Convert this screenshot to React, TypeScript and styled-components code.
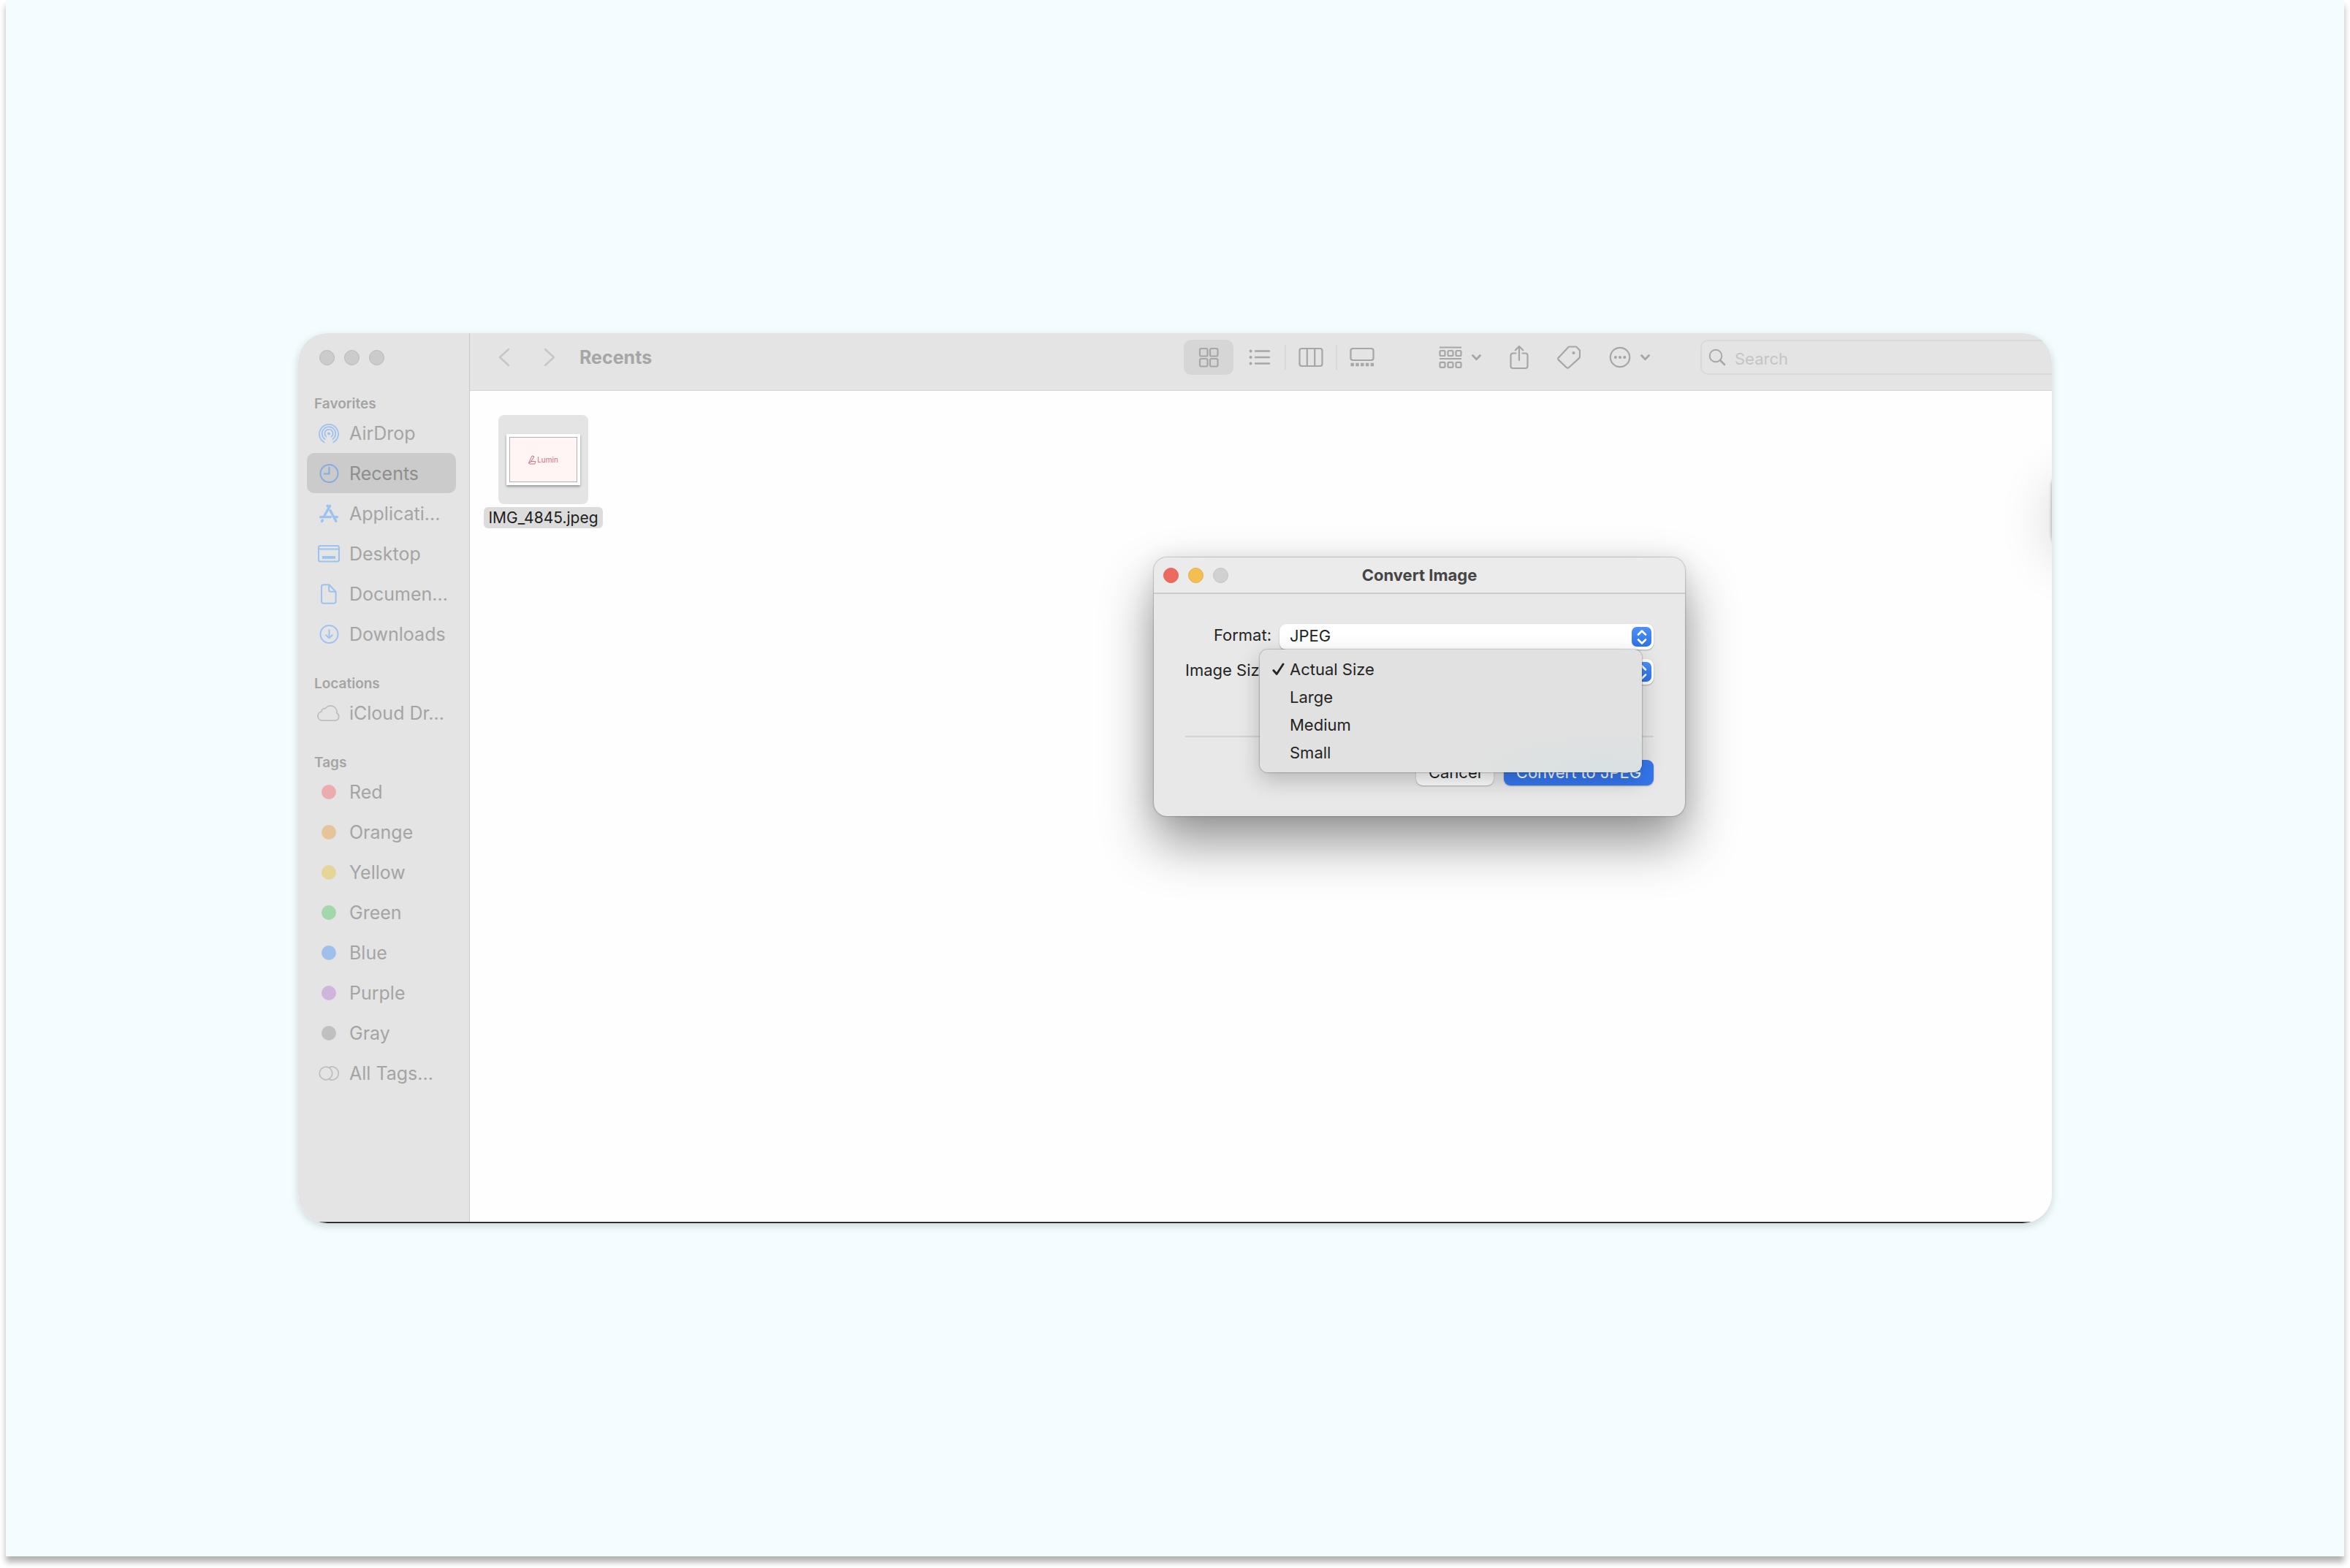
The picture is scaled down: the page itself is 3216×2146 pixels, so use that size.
import React from "react";
import styled, { createGlobalStyle, css } from "styled-components";

const GlobalStyle = createGlobalStyle`
  *, *::before, *::after { box-sizing: border-box; }
  body {
    margin: 0;
    background: #ffffff;
    font-family: Inter, "Liberation Sans", sans-serif;
    -webkit-font-smoothing: antialiased;
  }
  button, input, select {
    font: inherit;
    color: inherit;
    margin: 0;
    padding: 0;
    border: 0;
    background: none;
  }
  a { color: inherit; text-decoration: none; }
  h1, h2, ul, figure { margin: 0; padding: 0; }
  ul { list-style: none; }
  svg { display: block; flex: none; }
`;

/* ---------- page ---------- */

const Page = styled.div`
  padding: 0 8px 16px;
  overflow: hidden;
`;

const Sheet = styled.div`
  min-height: calc(100vh - 16px);
  padding: 0 400px;
  display: flex;
  align-items: center;
  background: #f3fcff;
  box-shadow: 0 8px 8px rgba(0, 0, 0, 0.3);
`;

/* ---------- finder window ---------- */

const Window = styled.section`
  flex: 1;
  min-width: 0;
  position: relative;
  display: flex;
  flex-direction: column;
  border-radius: 40px;
  overflow: hidden;
  background: #fefefe;
`;

const WindowShadow = styled.div`
  flex: 1;
  min-width: 0;
  display: flex;
  border-radius: 40px;
  box-shadow: 0 4px 12px rgba(0, 30, 40, 0.16);
`;

const Columns = styled.div`
  display: flex;
  min-height: 1216px;
`;

const BottomEdge = styled.div`
  height: 2px;
  background: linear-gradient(#6a6a6a 50%, #000000 50%);
`;

const Sidebar = styled.aside`
  width: 235px;
  flex: none;
  padding: 23px 18px 0 12px;
  background: #e4e4e4;
  border-right: 1px solid #c9c9c9;
  color: #a4a4a4;
`;

const Lights = styled.div<{ $inset: number }>`
  display: flex;
  gap: 13px;
  padding-left: ${(p) => p.$inset}px;
`;

const Light = styled.button<{ $fill: string; $ring: string }>`
  width: 21px;
  height: 21px;
  border-radius: 50%;
  background: ${(p) => p.$fill};
  border: 1px solid ${(p) => p.$ring};
`;

const Group = styled.nav`
  margin-top: 29px;
  &:first-of-type { margin-top: 41px; }
`;

const GroupTitle = styled.h2`
  padding-left: 10px;
  font-size: 19px;
  line-height: 24px;
  font-weight: 600;
`;

const Place = styled.a<{ $selected?: boolean }>`
  height: 55px;
  padding-left: 14px;
  display: flex;
  align-items: center;
  gap: 12px;
  border-radius: 10px;
  font-size: 25px;
  line-height: 32px;
  white-space: nowrap;
  ${(p) =>
    p.$selected &&
    css`
      background: #cbcbcb;
      color: #8e8e8e;
    `}
`;

const PlaceIcon = styled.span<{ $tone?: string }>`
  width: 32px;
  display: flex;
  justify-content: center;
  color: ${(p) => p.$tone ?? "#9cc2ef"};
`;

const Dot = styled.span<{ $fill: string }>`
  width: 20px;
  height: 20px;
  border-radius: 50%;
  background: ${(p) => p.$fill};
`;

const Main = styled.div`
  flex: 1;
  min-width: 0;
  display: flex;
  flex-direction: column;
`;

const Toolbar = styled.header`
  height: 79px;
  padding: 0 0 13px 36px;
  display: flex;
  align-items: center;
  background: #e4e4e4;
  border-bottom: 1px solid #d6d6d6;
  color: #a6a6a6;
`;

const NavButtons = styled.div`
  display: flex;
  gap: 40px;
  color: #c6c6c6;
`;

const IconButton = styled.button`
  display: flex;
  align-items: center;
  gap: 13px;
`;

const FolderTitle = styled.h1`
  flex: 1;
  padding-left: 30px;
  font-size: 25px;
  line-height: 32px;
  font-weight: 700;
`;

const ViewSwitch = styled.div`
  display: flex;
  align-items: center;
  margin-right: 71px;
`;

const ViewButton = styled.button<{ $active?: boolean }>`
  width: 68px;
  height: 48px;
  display: flex;
  align-items: center;
  justify-content: center;
  border-radius: 10px;
  background: ${(p) => (p.$active ? "#d6d6d6" : "transparent")};
`;

const Divider = styled.span<{ $hidden?: boolean }>`
  width: 2px;
  height: 34px;
  background: ${(p) => (p.$hidden ? "transparent" : "#d8d8d8")};
`;

const Actions = styled.div`
  display: flex;
  align-items: center;
  gap: 39px;
  margin-right: 69px;
`;

const SearchField = styled.label`
  width: 501px;
  height: 48px;
  margin-right: -20px;
  padding-left: 9px;
  display: flex;
  align-items: center;
  gap: 12px;
  border: 2px solid #d9d9d9;
  border-radius: 10px;
  input {
    flex: 1;
    min-width: 0;
    font-size: 22px;
    line-height: 28px;
    padding-top: 4px;
    outline: 0;
  }
  input::placeholder { color: #c4c4c4; opacity: 1; }
`;

const Files = styled.div`
  padding: 33px 19px;
  display: flex;
`;

const FileItem = styled.figure`
  width: 163px;
  display: flex;
  flex-direction: column;
  align-items: center;
  gap: 4px;
`;

const Thumb = styled.div`
  width: 123px;
  height: 122px;
  display: flex;
  align-items: center;
  justify-content: center;
  border-radius: 8px;
  background: #e4e4e4;
`;

const Photo = styled.div`
  width: 101px;
  height: 70px;
  padding: 4px;
  background: #ffffff;
  box-shadow: 0 2px 3px rgba(0, 0, 0, 0.35);
`;

const Artwork = styled.div`
  height: 62px;
  display: flex;
  align-items: center;
  justify-content: center;
  gap: 1px;
  border: 1px solid #b4b0b0;
  background: #fff5f4;
  color: #cf6f81;
  font-size: 10px;
  line-height: 12px;
  font-weight: 400;
`;

const FileName = styled.figcaption`
  width: 163px;
  border-radius: 6px;
  background: #dcdcdc;
  color: #1e1e1e;
  font-size: 21px;
  line-height: 29px;
  white-space: nowrap;
  text-align: center;
`;

/* A second window sits past the right edge; only its shadow shows. */
const NeighbourShadow = styled.div`
  position: absolute;
  left: 100%;
  top: 190px;
  width: 200px;
  height: 106px;
  border-radius: 20px;
  box-shadow: 0 0 4px rgba(0, 0, 0, 0.4), 0 14px 70px rgba(0, 0, 0, 0.16);
`;

/* ---------- dialog ---------- */

const Dialog = styled.section`
  position: absolute;
  left: 1171px;
  top: 307px;
  width: 727px;
  border-radius: 18px;
  background: #e8e8e8;
  color: #242424;
  font-size: 22px;
  line-height: 28px;
  box-shadow: 0 0 2px rgba(0, 0, 0, 0.55), 0 36px 70px rgba(0, 0, 0, 0.42),
    0 0 30px rgba(0, 0, 0, 0.08);
`;

const TitleBar = styled.header`
  height: 50px;
  display: grid;
  grid-template-columns: 1fr auto 1fr;
  align-items: center;
  border-bottom: 2px solid #cbcbcb;
  border-radius: 18px 18px 0 0;
  background: #ebebeb;
`;

const DialogTitle = styled.h2`
  font-size: 22px;
  line-height: 28px;
  font-weight: 700;
  color: #454545;
`;

const Form = styled.form`
  padding: 41px 43px 42px;
`;

const Fields = styled.div`
  display: grid;
  grid-template-columns: 118px 1fr;
  column-gap: 11px;
  row-gap: 13px;
  align-items: center;
`;

const FieldLabel = styled.label`
  text-align: right;
  white-space: nowrap;
  padding-bottom: 6px;
`;

const SelectBox = styled.div`
  position: relative;
  height: 35px;
  display: flex;
  border-radius: 9px;
  background: #ffffff;
  box-shadow: 0 1px 2px rgba(0, 0, 0, 0.28);
  select {
    flex: 1;
    appearance: none;
    padding: 0 40px 3px 14px;
    border-radius: 9px;
    outline: 0;
  }
`;

const Stepper = styled.span`
  position: absolute;
  right: 3px;
  top: 4px;
  width: 27px;
  height: 27px;
  display: flex;
  align-items: center;
  justify-content: center;
  border-radius: 7px;
  background: linear-gradient(#4d90f8, #2f72ea);
  color: #ffffff;
  pointer-events: none;
`;

const Rule = styled.hr`
  height: 2px;
  margin: 70px 0 0;
  border: 0;
  background: #d2d2d2;
`;

const Buttons = styled.div`
  display: flex;
  justify-content: flex-end;
  gap: 14px;
  padding-top: 31px;
`;

const PushButton = styled.button<{ $primary?: boolean }>`
  height: 35px;
  width: ${(p) => (p.$primary ? 205 : 106)}px;
  padding-bottom: 2px;
  white-space: nowrap;
  border-radius: 9px;
  color: ${(p) => (p.$primary ? "#ffffff" : "#242424")};
  background: ${(p) => (p.$primary ? "#3577ee" : "#fdfdfd")};
  box-shadow: 0 1px 2px rgba(0, 0, 0, 0.28);
`;

const Popup = styled.ul`
  position: absolute;
  left: 145px;
  top: 126px;
  width: 523px;
  padding: 8px 0;
  border-radius: 11px;
  background: radial-gradient(ellipse 190px 58px at 90% 100%, #dae1e2 20%, #e1e1e1 100%);
  box-shadow: 0 0 2px rgba(0, 0, 0, 0.6), 0 10px 30px rgba(0, 0, 0, 0.22);
`;

const Option = styled.li`
  button {
    width: 100%;
    height: 38px;
    padding-left: 17px;
    display: flex;
    align-items: center;
    gap: 7px;
    text-align: left;
  }
`;

const CheckSlot = styled.span`
  width: 17px;
  display: flex;
`;

/* ---------- icons ---------- */

const line = {
  fill: "none",
  stroke: "currentColor",
  strokeLinecap: "round" as const,
  strokeLinejoin: "round" as const,
};

const AirDropIcon = () => (
  <svg width="28" height="28" viewBox="0 0 28 28" {...line} strokeWidth="1.8">
    <circle cx="14" cy="14.5" r="2" fill="currentColor" stroke="none" />
    <path d="M7.6 26.2a13 13 0 1 1 12.8 0" />
    <path d="M8.6 22a9.3 9.3 0 1 1 10.8 0" />
    <path d="M10.4 18.6a5.6 5.6 0 1 1 7.2 0" />
  </svg>
);

const ClockIcon = () => (
  <svg width="28" height="28" viewBox="0 0 28 28" {...line} strokeWidth="2">
    <circle cx="14.5" cy="14" r="12" />
    <path d="M14.5 5.5V14.5H7.8" />
  </svg>
);

const AppsIcon = () => (
  <svg width="28" height="26" viewBox="0 0 28 26" {...line} strokeWidth="3.4">
    <path d="M15.6 2.4 7 17.5M12.2 2.4l1.8 3M16 8.8l7.8 14.4M2.6 17.6h14M22.6 17.6h2.8M5.4 22l-.8 1.6" />
  </svg>
);

const DesktopIcon = () => (
  <svg width="30" height="24" viewBox="0 0 30 24" {...line} strokeWidth="2">
    <rect x="1" y="1" width="28" height="21.5" rx="2.5" />
    <path d="M1 5.5h28" />
    <rect x="6" y="15" width="18" height="3.8" fill="currentColor" stroke="none" />
  </svg>
);

const DocumentIcon = () => (
  <svg width="22" height="28" viewBox="0 0 22 28" {...line} strokeWidth="2">
    <path d="M4 1.2h7.5L20.6 11v12.8a3 3 0 0 1-3 3H4a3 3 0 0 1-3-3V4.2a3 3 0 0 1 3-3z" />
    <path d="M11.2 1.5v7.3a2 2 0 0 0 2 2h7" />
  </svg>
);

const DownloadIcon = () => (
  <svg width="28" height="28" viewBox="0 0 28 28" {...line} strokeWidth="1.9">
    <circle cx="14.5" cy="14" r="12" />
    <path d="M14.5 8v11.2M10.2 15.2l4.3 4.2 4.3-4.2" />
  </svg>
);

const CloudIcon = () => (
  <svg width="32" height="24" viewBox="0 0 32 24" {...line} strokeWidth="1.8">
    <path d="M7.5 22.2a6.2 6.2 0 0 1-1.8-12.2 5.2 5.2 0 0 1 5.6-4.3 8.6 8.6 0 0 1 15.6 6.3 5.5 5.5 0 0 1-1.7 10.2z" />
  </svg>
);

const AllTagsIcon = () => (
  <svg width="28" height="20" viewBox="0 0 28 20" {...line} strokeWidth="1.7">
    <circle cx="10" cy="10" r="8.8" />
    <path d="M14.5 1.8a9 9 0 1 1 0 16.4" />
  </svg>
);

const ChevronNav = ({ back }: { back?: boolean }) => (
  <svg width="22" height="28" viewBox="0 0 22 28" {...line} strokeWidth="2.4">
    <path d={back ? "M17 3 5 14l12 11" : "M5 3l12 11L5 25"} />
  </svg>
);

const GridIcon = () => (
  <svg width="28" height="28" viewBox="0 0 28 28" {...line} strokeWidth="2.2">
    {[2, 16].map((x) =>
      [2, 16].map((y) => <rect key={`${x}-${y}`} x={x} y={y} width="10.5" height="10.5" rx="2" />)
    )}
  </svg>
);

const ListIcon = () => (
  <svg width="30" height="24" viewBox="0 0 30 24" {...line} strokeWidth="2.4">
    <path d="M9 3.5h19M9 12h19M9 20.5h19" />
    <path d="M2.5 3.5h.1M2.5 12h.1M2.5 20.5h.1" strokeWidth="3.8" />
  </svg>
);

const ColumnsIcon = () => (
  <svg width="34" height="28" viewBox="0 0 34 28" {...line} strokeWidth="2.2">
    <rect x="1.5" y="2" width="31" height="24" rx="3" />
    <path d="M11.8 2v24M22.2 2v24" />
  </svg>
);

const GalleryIcon = () => (
  <svg width="34" height="28" viewBox="0 0 34 28" {...line} strokeWidth="2.2">
    <rect x="1.5" y="2" width="31" height="16" rx="3" />
    <path d="M1.5 24h32" strokeWidth="4.6" strokeLinecap="butt" strokeDasharray="4.4 2.4" />
  </svg>
);

const GroupIcon = () => (
  <svg width="32" height="30" viewBox="0 0 32 30" {...line} strokeWidth="2.2">
    <path d="M1 1.5h30M1 17h30" strokeLinecap="butt" />
    {[1.5, 12.5, 23.5].map((x) =>
      [6, 21.8].map((y) => <rect key={`${x}-${y}`} x={x} y={y} width="7" height="7" rx="1.6" />)
    )}
  </svg>
);

const CaretIcon = () => (
  <svg width="13" height="10" viewBox="0 0 13 10" {...line} strokeWidth="2.8">
    <path d="M1.5 2.5l5 5.3 5-5.3" />
  </svg>
);

const ShareIcon = () => (
  <svg width="26" height="34" viewBox="0 0 26 34" {...line} strokeWidth="2.2">
    <path d="M8.5 11.5H4.5a3 3 0 0 0-3 3V29a3 3 0 0 0 3 3h17a3 3 0 0 0 3-3V14.5a3 3 0 0 0-3-3h-4" />
    <path d="M13 21V2.5M7.8 7.2 13 2l5.2 5.2" />
  </svg>
);

const TagIcon = () => (
  <svg width="32" height="32" viewBox="0 0 32 32" {...line} strokeWidth="2.2">
    <path d="M17 1.5h8.3a2 2 0 0 1 1.4.6l3.7 3.8a2 2 0 0 1 .6 1.4v7.7a3 3 0 0 1-.9 2.1L16 30a2.2 2.2 0 0 1-3.2 0L1.9 19.6a2.2 2.2 0 0 1 0-3.2L14.9 2.4a3 3 0 0 1 2.1-.9z" />
    <circle cx="22.5" cy="10" r="2" fill="currentColor" stroke="none" />
  </svg>
);

const MoreIcon = () => (
  <svg width="30" height="30" viewBox="0 0 30 30" {...line} strokeWidth="2.2">
    <circle cx="15" cy="15" r="13.2" />
    <path d="M8.8 15h.1M15 15h.1M21.2 15h.1" strokeWidth="4" />
  </svg>
);

const SearchIcon = () => (
  <svg width="24" height="24" viewBox="0 0 24 24" {...line} strokeWidth="1.9">
    <circle cx="10" cy="10" r="8.3" />
    <path d="M16 16l6 6" strokeWidth="2.6" />
  </svg>
);

const LuminMark = () => (
  <svg width="11" height="13" viewBox="0 0 11 13" {...line} strokeWidth="1">
    <path d="M5.4 1 8 1.800 3.800 8.600.9 10.600z" />
    <path d="M.9 10.600 3.800 8.600H10L8.700 12H2.200z" />
  </svg>
);

const StepperIcon = () => (
  <svg width="14" height="20" viewBox="0 0 14 20" {...line} strokeWidth="2.6">
    <path d="M2 6.5l5-5 5 5M2 13.5l5 5 5-5" />
  </svg>
);

const CheckIcon = () => (
  <svg width="17" height="18" viewBox="0 0 17 18" {...line} strokeWidth="2.8">
    <path d="M1.8 10.5l4.4 5L15 2" />
  </svg>
);

/* ---------- data ---------- */

const favorites = [
  { name: "AirDrop", icon: <AirDropIcon /> },
  { name: "Recents", icon: <ClockIcon />, selected: true },
  { name: "Applicati...", icon: <AppsIcon /> },
  { name: "Desktop", icon: <DesktopIcon /> },
  { name: "Documen...", icon: <DocumentIcon /> },
  { name: "Downloads", icon: <DownloadIcon /> },
];

const tags = [
  { name: "Red", fill: "#ebacab" },
  { name: "Orange", fill: "#e6c499" },
  { name: "Yellow", fill: "#e5d697" },
  { name: "Green", fill: "#a3d7aa" },
  { name: "Blue", fill: "#9fc0ec" },
  { name: "Purple", fill: "#cfb4dc" },
  { name: "Gray", fill: "#c0c0c0" },
];

const sizes = ["Actual Size", "Large", "Medium", "Small"];

const GREY_ICON = "#bdbdbd";

const FinderSidebar = () => (
  <Sidebar>
    <Lights $inset={17}>
      {["Close", "Minimize", "Zoom"].map((n) => (
        <Light key={n} aria-label={n} $fill="#cbcbcb" $ring="#b9b9b9" />
      ))}
    </Lights>
    <Group aria-label="Favorites">
      <GroupTitle>Favorites</GroupTitle>
      {favorites.map((f) => (
        <Place key={f.name} href="#" $selected={f.selected}>
          <PlaceIcon $tone={f.selected ? "#83acdf" : undefined}>{f.icon}</PlaceIcon>
          {f.name}
        </Place>
      ))}
    </Group>
    <Group aria-label="Locations">
      <GroupTitle>Locations</GroupTitle>
      <Place href="#">
        <PlaceIcon $tone={GREY_ICON}>
          <CloudIcon />
        </PlaceIcon>
        iCloud Dr...
      </Place>
    </Group>
    <Group aria-label="Tags">
      <GroupTitle>Tags</GroupTitle>
      {tags.map((t) => (
        <Place key={t.name} href="#">
          <PlaceIcon>
            <Dot $fill={t.fill} />
          </PlaceIcon>
          {t.name}
        </Place>
      ))}
      <Place href="#">
        <PlaceIcon $tone={GREY_ICON}>
          <AllTagsIcon />
        </PlaceIcon>
        All Tags...
      </Place>
    </Group>
  </Sidebar>
);

const FinderToolbar = () => (
  <Toolbar>
    <NavButtons>
      <IconButton aria-label="Back">
        <ChevronNav back />
      </IconButton>
      <IconButton aria-label="Forward">
        <ChevronNav />
      </IconButton>
    </NavButtons>
    <FolderTitle>Recents</FolderTitle>
    <ViewSwitch>
      <ViewButton $active aria-label="Icons">
        <GridIcon />
      </ViewButton>
      <Divider $hidden />
      <ViewButton aria-label="List">
        <ListIcon />
      </ViewButton>
      <Divider />
      <ViewButton aria-label="Columns">
        <ColumnsIcon />
      </ViewButton>
      <Divider />
      <ViewButton aria-label="Gallery">
        <GalleryIcon />
      </ViewButton>
    </ViewSwitch>
    <Actions>
      <IconButton aria-label="Group by">
        <GroupIcon />
        <CaretIcon />
      </IconButton>
      <IconButton aria-label="Share">
        <ShareIcon />
      </IconButton>
      <IconButton aria-label="Edit tags">
        <TagIcon />
      </IconButton>
      <IconButton aria-label="More">
        <MoreIcon />
        <CaretIcon />
      </IconButton>
    </Actions>
    <SearchField>
      <SearchIcon />
      <input type="search" placeholder="Search" aria-label="Search" />
    </SearchField>
  </Toolbar>
);

const ConvertDialog = () => (
  <Dialog role="dialog" aria-labelledby="convert-title">
    <TitleBar>
      <Lights $inset={13}>
        <Light aria-label="Close" $fill="#ed6a5f" $ring="#e1625a" />
        <Light aria-label="Minimize" $fill="#f5bf4f" $ring="#e3b04a" />
        <Light aria-label="Zoom" $fill="#d1d1d1" $ring="#c3c3c3" />
      </Lights>
      <DialogTitle id="convert-title">Convert Image</DialogTitle>
    </TitleBar>
    <Form onSubmit={(e) => e.preventDefault()}>
      <Fields>
        <FieldLabel htmlFor="format">Format:</FieldLabel>
        <SelectBox>
          <select id="format" defaultValue="JPEG">
            <option>JPEG</option>
          </select>
          <Stepper>
            <StepperIcon />
          </Stepper>
        </SelectBox>
        <FieldLabel htmlFor="size">Image Size:</FieldLabel>
        <SelectBox>
          <select id="size" defaultValue="Actual Size">
            {sizes.map((s) => (
              <option key={s}>{s}</option>
            ))}
          </select>
          <Stepper>
            <StepperIcon />
          </Stepper>
        </SelectBox>
      </Fields>
      <Rule />
      <Buttons>
        <PushButton type="button">Cancel</PushButton>
        <PushButton type="submit" $primary>
          Convert to JPEG
        </PushButton>
      </Buttons>
    </Form>
    <Popup>
      {sizes.map((s, i) => (
        <Option key={s}>
          <button type="button">
            <CheckSlot>{i === 0 && <CheckIcon />}</CheckSlot>
            {s}
          </button>
        </Option>
      ))}
    </Popup>
  </Dialog>
);

export default function App() {
  return (
    <>
      <GlobalStyle />
      <Page>
        <Sheet>
          <WindowShadow>
            <Window>
              <Columns>
                <FinderSidebar />
                <Main>
                  <FinderToolbar />
                  <Files>
                    <FileItem>
                      <Thumb>
                        <Photo>
                          <Artwork>
                            <LuminMark />
                            Lumin
                          </Artwork>
                        </Photo>
                      </Thumb>
                      <FileName>IMG_4845.jpeg</FileName>
                    </FileItem>
                  </Files>
                </Main>
              </Columns>
              <BottomEdge />
              <NeighbourShadow />
              <ConvertDialog />
            </Window>
          </WindowShadow>
        </Sheet>
      </Page>
    </>
  );
}
